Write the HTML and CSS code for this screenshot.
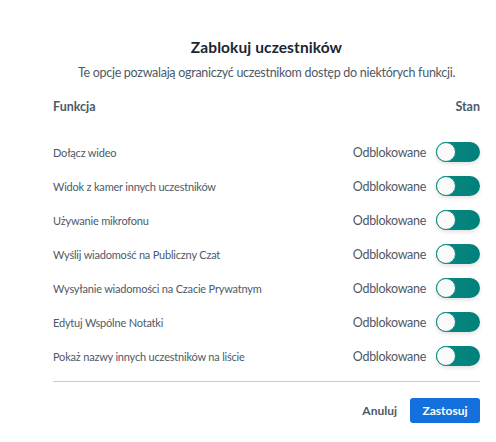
FILE: index.html
```html
<!DOCTYPE html>
<html lang="pl">
<head>
<meta charset="utf-8">
<link rel="stylesheet" href="styles.css">
</head>
<body>
<div class="modal">
  <h1 class="title">Zablokuj uczestników</h1>
  <p class="subtitle">Te opcje pozwalają ograniczyć uczestnikom dostęp do niektórych funkcji.</p>
  <div class="head">
    <span>Funkcja</span>
    <span>Stan</span>
  </div>
  <div class="rows">
    <div class="row"><span class="label">Dołącz wideo</span><span class="state">Odblokowane<span class="toggle"><span class="knob"></span></span></span></div>
    <div class="row"><span class="label">Widok z kamer innych uczestników</span><span class="state">Odblokowane<span class="toggle"><span class="knob"></span></span></span></div>
    <div class="row"><span class="label">Używanie mikrofonu</span><span class="state">Odblokowane<span class="toggle"><span class="knob"></span></span></span></div>
    <div class="row"><span class="label">Wyślij wiadomość na Publiczny Czat</span><span class="state">Odblokowane<span class="toggle"><span class="knob"></span></span></span></div>
    <div class="row"><span class="label">Wysyłanie wiadomości na Czacie Prywatnym</span><span class="state">Odblokowane<span class="toggle"><span class="knob"></span></span></span></div>
    <div class="row"><span class="label">Edytuj Wspólne Notatki</span><span class="state">Odblokowane<span class="toggle"><span class="knob"></span></span></span></div>
    <div class="row"><span class="label">Pokaż nazwy innych uczestników na liście</span><span class="state">Odblokowane<span class="toggle"><span class="knob"></span></span></span></div>
  </div>
  <div class="divider"></div>
  <div class="actions">
    <button class="btn-cancel">Anuluj</button>
    <button class="btn-apply">Zastosuj</button>
  </div>
</div>
</body>
</html>
```

FILE: styles.css
```css
* { box-sizing: border-box; }
html, body { margin: 0; padding: 0; background: #ffffff; }
body { font-family: "Lato", "Liberation Sans", sans-serif; }
.modal {
  width: 427px;
  margin-left: 53px;
  padding-top: 37px;
  display: flex;
  flex-direction: column;
}
.title {
  margin: 0;
  text-align: center;
  font-size: 15.5px;
  line-height: 20px;
  font-weight: 700;
  color: #1c2632;
  letter-spacing: 0.1px;
}
.subtitle {
  margin: 7px 0 0 0;
  text-align: center;
  font-size: 12.5px;
  line-height: 18px;
  letter-spacing: -0.28px;
  white-space: nowrap;
  color: #4d5a67;
}
.head {
  margin-top: 17px;
  display: flex;
  justify-content: space-between;
  font-size: 12.5px;
  line-height: 16px;
  font-weight: 700;
  color: #4d5a67;
}
.rows {
  margin-top: 20px;
  display: flex;
  flex-direction: column;
}
.row {
  height: 34px;
  display: flex;
  align-items: center;
  justify-content: space-between;
}
.label {
  font-size: 11px;
  letter-spacing: -0.2px;
  color: #4d5a67;
}
.state {
  display: flex;
  align-items: center;
  gap: 10px;
  font-size: 12.5px;
  letter-spacing: -0.3px;
  color: #4d5a67;
}
.toggle {
  width: 44px;
  height: 20px;
  border-radius: 10px;
  background: linear-gradient(90deg, #0a8a80 0%, #00807a 100%);
  display: flex;
  align-items: center;
  box-shadow: 0 2px 4px rgba(0,0,0,0.12);
}
.knob {
  width: 20px;
  height: 20px;
  border-radius: 50%;
  background: #fafafa;
  border: 1.5px solid #0a8a80;
}
.divider {
  margin-top: 8px;
  height: 1px;
  background: #c4ccd4;
}
.actions {
  margin-top: 16px;
  display: flex;
  justify-content: flex-end;
  align-items: center;
  gap: 13px;
}
.btn-cancel {
  border: none;
  background: none;
  padding: 0;
  font-family: inherit;
  font-size: 12px;
  font-weight: 700;
  color: #4d5a67;
}
.btn-apply {
  width: 70px;
  height: 25px;
  border: none;
  border-radius: 3px;
  background: #1470dc;
  color: #ffffff;
  font-family: inherit;
  font-size: 12px;
  font-weight: 700;
  padding: 0;
}
```
